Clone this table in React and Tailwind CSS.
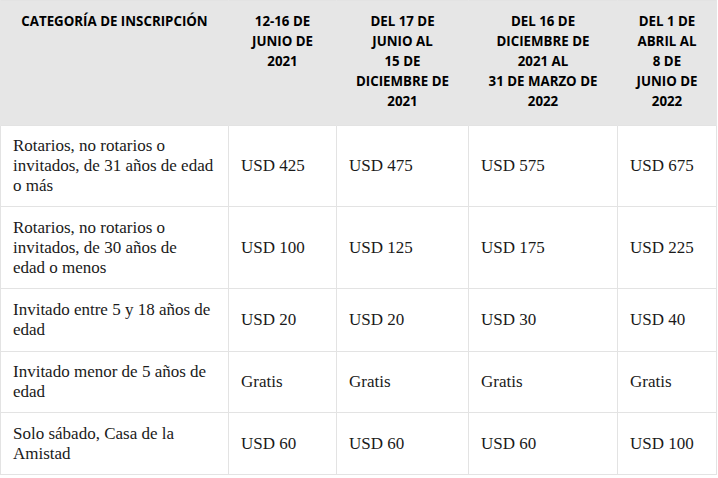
import React from "react";

const headers = [
  ["CATEGORÍA DE INSCRIPCIÓN"],
  ["12-16 DE", "JUNIO DE", "2021"],
  ["DEL 17 DE", "JUNIO AL", "15 DE", "DICIEMBRE DE", "2021"],
  ["DEL 16 DE", "DICIEMBRE DE", "2021 AL", "31 DE MARZO DE", "2022"],
  ["DEL 1 DE", "ABRIL AL", "8 DE", "JUNIO DE", "2022"],
];

const rows = [
  { h: "h-[81px]", cat: ["Rotarios, no rotarios o", "invitados, de 31 años de edad", "o más"], v: ["USD 425", "USD 475", "USD 575", "USD 675"] },
  { h: "h-[82px]", cat: ["Rotarios, no rotarios o", "invitados, de 30 años de", "edad o menos"], v: ["USD 100", "USD 125", "USD 175", "USD 225"] },
  { h: "h-[63px]", cat: ["Invitado entre 5 y 18 años de", "edad"], v: ["USD 20", "USD 20", "USD 30", "USD 40"] },
  { h: "h-[61px]", cat: ["Invitado menor de 5 años de", "edad"], v: ["Gratis", "Gratis", "Gratis", "Gratis"] },
  { h: "h-[62px]", cat: ["Solo sábado, Casa de la", "Amistad"], v: ["USD 60", "USD 60", "USD 60", "USD 100"] },
];

const widths = ["w-[228px]", "w-[108px]", "w-[132px]", "w-[149px]", "w-[99px]"];

export default function App() {
  return (
    <div className="w-[718px] h-[478px] bg-white">
      <table className="table-fixed border-collapse w-[716px] border border-[#e3e3e3]">
        <colgroup>
          {widths.map((w, i) => (
            <col key={i} className={w} />
          ))}
        </colgroup>
        <thead>
          <tr className="h-[125px] bg-[#e6e6e6]">
            {headers.map((lines, i) => (
              <th
                key={i}
                className="align-top text-center px-2 pt-[10px] font-bold text-[13.3px] leading-[20px] text-black whitespace-nowrap border-x border-[#e6e6e6]"
                style={{ fontFamily: '"Open Sans", sans-serif' }}
              >
                {lines.map((l, j) => (
                  <div key={j}>{l}</div>
                ))}
              </th>
            ))}
          </tr>
        </thead>
        <tbody style={{ fontFamily: '"Liberation Serif", serif' }}>
          {rows.map((r, i) => (
            <tr key={i} className={r.h}>
              <td className="align-middle pl-[12px] pr-2 text-[17px] leading-[20px] text-[#1a1a1a] border border-[#e3e3e3] whitespace-nowrap">
                {r.cat.map((l, j) => (
                  <div key={j}>{l}</div>
                ))}
              </td>
              {r.v.map((v, j) => (
                <td
                  key={j}
                  className="align-middle pl-[12px] pr-2 text-[17px] leading-[20px] text-[#1a1a1a] border border-[#e3e3e3] whitespace-nowrap"
                >
                  {v}
                </td>
              ))}
            </tr>
          ))}
        </tbody>
      </table>
    </div>
  );
}
